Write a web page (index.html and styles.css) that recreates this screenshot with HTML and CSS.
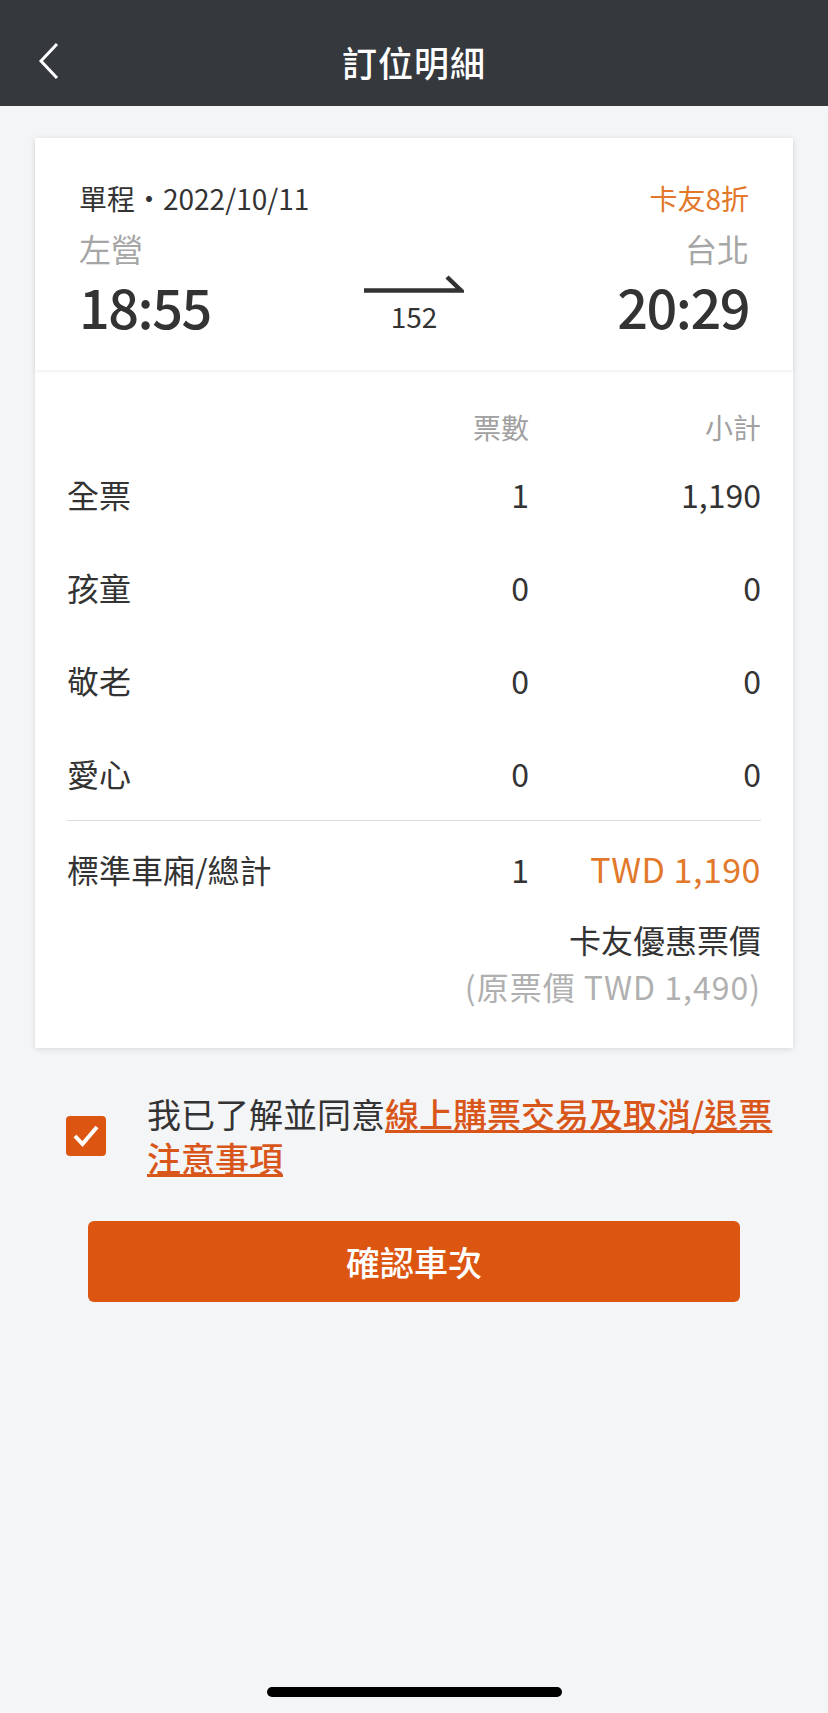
FILE: index.html
```html
<!DOCTYPE html>
<html>
<head>
  <title>訂位明細</title>
  <meta charset="UTF-8">
  <link rel="stylesheet" href="styles.css">
</head>
<body>
  <div class="page">
    <header class="nav-bar">
      <button class="back-btn" aria-label="返回">
        <svg width="22" height="38" viewBox="0 0 22 38"><path d="M19 2 L3 19 L19 36" fill="none" stroke="#fff" stroke-width="3"/></svg>
      </button>
      <h1>訂位明細</h1>
      <span></span>
    </header>

    <main class="content">
      <section class="booking-card">
        <div class="trip-info">
          <div class="trip-row meta">
            <span>單程・2022/10/11</span>
            <span class="promo">卡友8折</span>
          </div>
          <div class="trip-row stations">
            <span>左營</span>
            <span>台北</span>
          </div>
          <div class="trip-times">
            <span class="time">18:55</span>
            <div class="train">
              <svg width="100" height="18" viewBox="0 0 100 18"><path d="M0 15.5 H97 L83 2" fill="none" stroke="#333" stroke-width="4.5"/></svg>
              <span class="train-no">152</span>
            </div>
            <span class="time arrive">20:29</span>
          </div>
        </div>

        <div class="fare-table">
          <div class="fare-row fare-head">
            <span></span><span>票數</span><span>小計</span>
          </div>
          <div class="fare-row">
            <span>全票</span><span>1</span><span>1,190</span>
          </div>
          <div class="fare-row">
            <span>孩童</span><span>0</span><span>0</span>
          </div>
          <div class="fare-row">
            <span>敬老</span><span>0</span><span>0</span>
          </div>
          <div class="fare-row">
            <span>愛心</span><span>0</span><span>0</span>
          </div>
          <div class="fare-row fare-total">
            <span>標準車廂/總計</span><span>1</span><span class="total-price">TWD 1,190</span>
          </div>
          <div class="discount-title">卡友優惠票價</div>
          <div class="original-price">(原票價 TWD 1,490)</div>
        </div>
      </section>

      <label class="agree">
        <span class="checkbox">
          <svg width="28" height="24" viewBox="0 0 28 24"><path d="M3 12 L10.5 20 L25 3" fill="none" stroke="#fff" stroke-width="4"/></svg>
        </span>
        <span class="agree-text">我已了解並同意<a href="#">線上購票交易及取消/退票注意事項</a></span>
      </label>

      <button class="confirm-btn">確認車次</button>
    </main>

    <div class="home-indicator"></div>
  </div>
</body>
</html>
```

FILE: styles.css
```css
:root {
  --bg-color: #f4f5f7;
  --bar-color: #35393e;
  --text-color: #333333;
  --muted-color: #a6a6a6;
  --orange: #e2782a;
  --deep-orange: #dc5511;
  --divider: #dcdcdc;
}

body {
  margin: 0;
  background-color: var(--bg-color);
  font-family: "Noto Sans CJK TC", "Noto Sans", sans-serif;
  color: var(--text-color);
}

.page {
  width: 828px;
  min-height: 1713px;
  display: flex;
  flex-direction: column;
}

/* Top bar */
.nav-bar {
  height: 90px;
  padding-top: 16px;
  background-color: var(--bar-color);
  display: grid;
  grid-template-columns: 110px 1fr 110px;
  align-items: center;
}

.back-btn {
  background: none;
  border: none;
  padding: 0 0 0 38px;
  display: flex;
  cursor: pointer;
}

.nav-bar h1 {
  margin: 0;
  text-align: center;
  color: #fff;
  font-size: 35px;
  font-weight: 500;
  letter-spacing: 1px;
}

.content {
  padding: 32px 35px 0;
  display: flex;
  flex-direction: column;
}

/* Card */
.booking-card {
  background-color: #fff;
  box-shadow: 0 1px 6px rgba(0, 0, 0, 0.12);
}

.trip-info {
  position: relative;
  padding: 40px 44px 34px;
  box-shadow: 0 2px 3px rgba(0, 0, 0, 0.06);
}

.trip-row {
  display: flex;
  justify-content: space-between;
}

.meta {
  font-size: 28px;
  line-height: 40px;
}

.promo {
  color: var(--orange);
}

.stations {
  margin-top: 8px;
  font-size: 32px;
  line-height: 44px;
  color: var(--muted-color);
}

.trip-times {
  margin-top: 6px;
  display: grid;
  grid-template-columns: 1fr auto 1fr;
}

.time {
  font-size: 54px;
  font-weight: 500;
  line-height: 60px;
  letter-spacing: -1.5px;
}

.time.arrive {
  text-align: right;
}

.train {
  margin-top: -1px;
  display: flex;
  flex-direction: column;
  align-items: center;
}

.train-no {
  margin-top: 10px;
  font-size: 28px;
  line-height: 26px;
}

/* Fare table */
.fare-table {
  padding: 36px 32px 37px;
}

.fare-row {
  display: grid;
  grid-template-columns: 1fr 120px 232px;
  font-size: 32px;
  line-height: 93px;
}

.fare-row span:nth-child(n+2) {
  text-align: right;
}

.fare-head {
  font-size: 28px;
  line-height: 42px;
  color: #a0a0a0;
}

.fare-total {
  border-top: 1px solid var(--divider);
  line-height: 96px;
}

.total-price {
  color: var(--orange);
  font-size: 34px;
  letter-spacing: 0.5px;
}

.discount-title {
  text-align: right;
  font-size: 32px;
  line-height: 44px;
}

.original-price {
  text-align: right;
  font-size: 32px;
  line-height: 50px;
  letter-spacing: 1px;
  color: #b0b0b0;
}

/* Agreement */
.agree {
  margin-top: 44px;
  padding: 0 0 0 31px;
  display: flex;
  align-items: center;
  gap: 41px;
}

.checkbox {
  width: 40px;
  height: 40px;
  flex-shrink: 0;
  border-radius: 4px;
  background-color: var(--deep-orange);
  display: flex;
  align-items: center;
  justify-content: center;
}

.agree-text {
  font-size: 34px;
  line-height: 44px;
}

.agree-text a {
  color: #d9561b;
  font-weight: 500;
  text-decoration: underline;
}

.confirm-btn {
  margin: 41px 53px 0;
  height: 81px;
  border: none;
  border-radius: 6px;
  background-color: var(--deep-orange);
  color: #fff;
  font-family: inherit;
  font-size: 34px;
  font-weight: 500;
  cursor: pointer;
}

.home-indicator {
  width: 295px;
  height: 10px;
  border-radius: 5px;
  background-color: #000;
  margin: auto auto 16px;
}
```
